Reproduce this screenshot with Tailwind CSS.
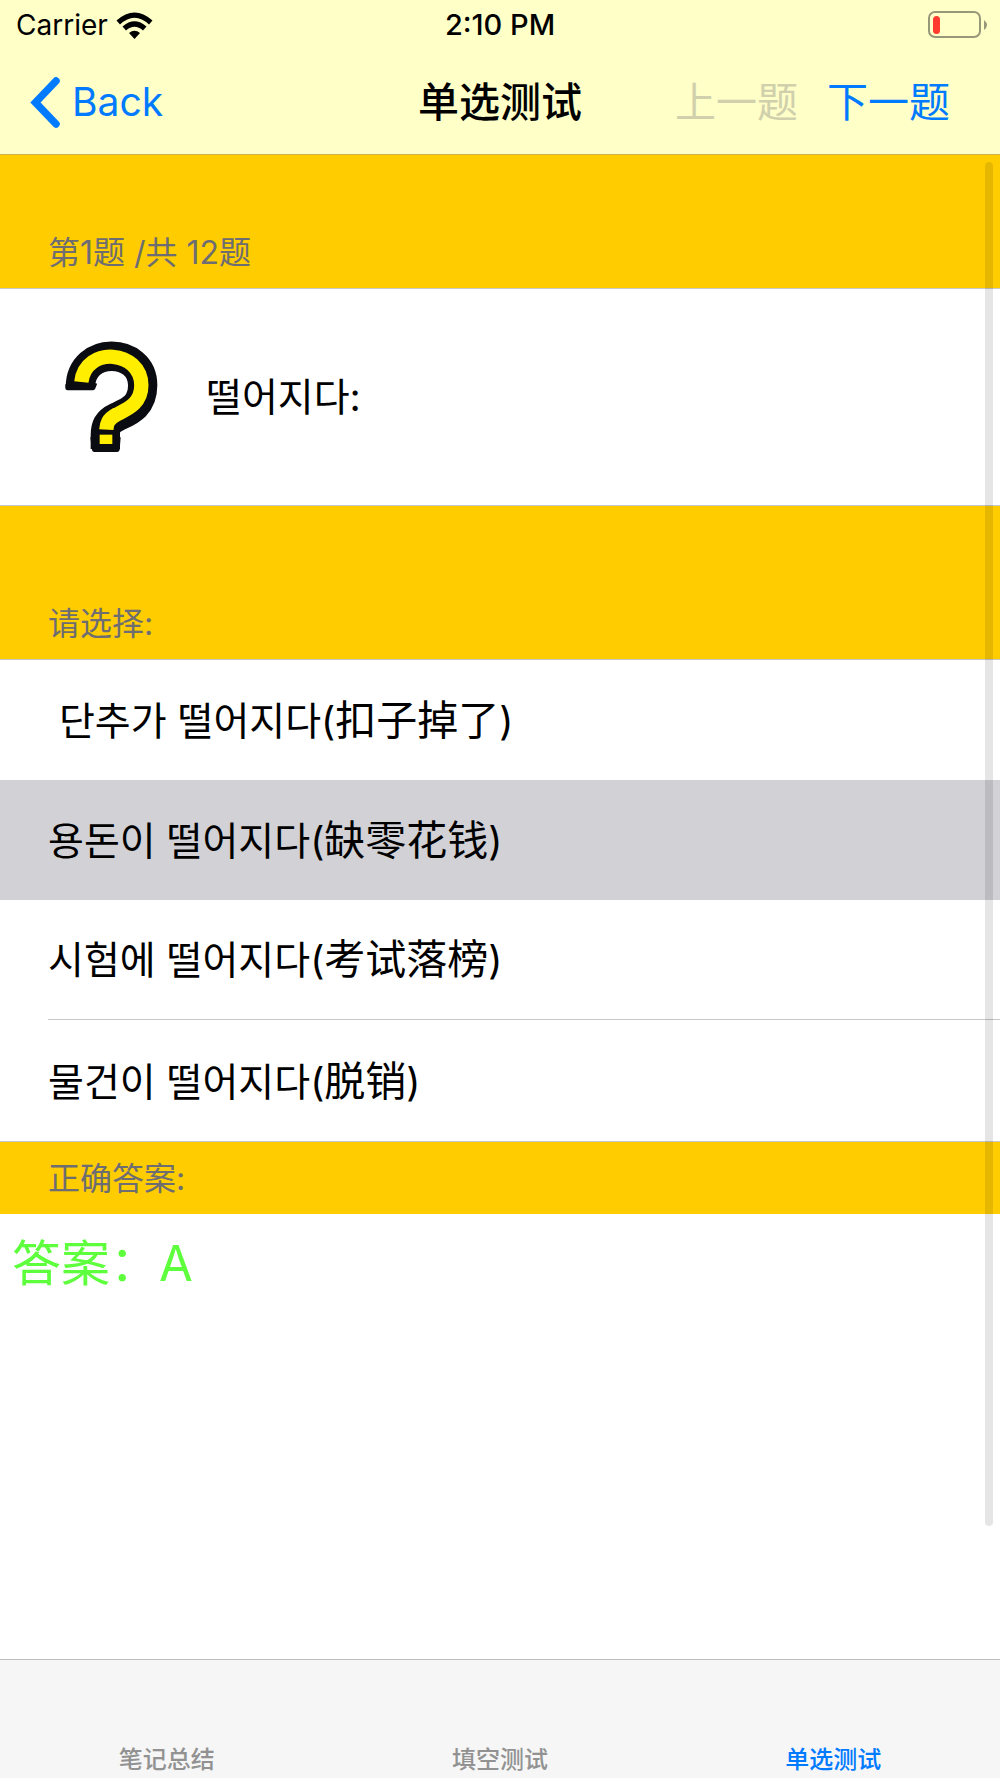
<!DOCTYPE html>
<html lang="zh-CN">
<head>
<meta charset="utf-8">
<meta name="viewport" content="width=device-width, initial-scale=1">
<title>单选测试</title>
<script src="https://cdn.jsdelivr.net/npm/@tailwindcss/browser@4"></script>
</head>
<body class="relative flex min-h-screen flex-col bg-white font-[Inter,'Noto_Sans_CJK_SC',sans-serif] text-black">
  <header class="border-b border-[#d1b24a] bg-[#ffffc8]">
    <div class="grid h-[50px] grid-cols-[1fr_auto_1fr] items-center text-[28px] leading-8">
      <div class="flex items-center gap-2 pl-4">
        <span>Carrier</span>
        <svg class="h-[27px] w-[37px]" viewBox="0 0 37 27" aria-label="Wi-Fi">
          <path d="M0.5 8.5 Q18.5 -7.5 36.5 8.500 L33 12.500 Q18.500 -1 4 12.500Z"/>
          <path d="M6.500 14.500 Q18.500 4 30.500 14.500 L27 18.500 Q18.500 11 10 18.500Z"/>
          <path d="M13 21 Q18.500 16.500 24 21 L18.500 27Z"/>
        </svg>
      </div>
      <time class="text-[29px] font-medium">2:10 PM</time>
      <svg class="mr-3 h-7 w-[60px] justify-self-end" viewBox="0 0 60 28" aria-label="电量低">
        <rect x="1" y="1" width="51" height="25" rx="6" fill="none" stroke="#97977a" stroke-width="2"/>
        <rect x="5" y="5" width="7" height="18" rx="3.500" fill="#ff3b30"/>
        <path d="M56 9 Q62 14 56 19Z" fill="#97977a"/>
      </svg>
    </div>
    <nav class="grid h-[104px] grid-cols-[1fr_auto_1fr] items-center text-[41px] leading-[48px]">
      <a href="#" class="flex items-center gap-3 pl-[30px] text-[39px] text-[#007aff]">
        <svg class="h-[51px] w-[30px]" viewBox="0 0 30 51" fill="none" stroke="currentColor" stroke-width="7.500" stroke-linecap="round" stroke-linejoin="miter" aria-hidden="true"><path d="M26 4 L5.500 25.500 L26 47"/></svg>
        Back
      </a>
      <h1 class="font-medium">单选测试</h1>
      <div class="flex justify-end gap-[29px] pr-[50px] whitespace-nowrap">
        <button type="button" disabled class="text-[#d0d0ac]">上一题</button>
        <button type="button" class="text-[#007aff]">下一题</button>
      </div>
    </nav>
  </header>

  <main class="flex-1">
    <h2 class="flex h-[133px] items-end bg-[#ffcc00] px-12 pb-[13px] text-[32px] leading-[44px] text-[#6d6d72]">第1题 /共 12题</h2>
    <section class="flex h-[218px] items-center gap-12 border-y border-[#c8c7cc] pl-[65px]">
      <svg class="h-[112px] w-[93px]" viewBox="196 362 279 336" fill="none" aria-label="问题">
        <g stroke="#0b0b12">
          <path stroke-width="88" d="M242 502 C242 375 429 380 429 495 C429 560 385 574 352 590 C322 604 317 620 317 645 V686"/>
          <path stroke-width="14" stroke-linejoin="round" d="M204 492 V503 H280 L286 488 M279 650 L284 688 H353 L356 650"/>
        </g>
        <path stroke="#ffee00" stroke-width="43" d="M245 485 C258 375 425 390 425 495 C425 552 380 567 350 583 C324 597 321 612 320 628"/>
        <path stroke="#ffee00" stroke-width="38" d="M319 643 V671"/>
      </svg>
      <p lang="ko" class="text-[39px] leading-[48px]">떨어지다:</p>
    </section>
    <h2 class="flex h-[153px] items-end bg-[#ffcc00] px-12 pb-[13px] text-[32px] leading-[44px] text-[#6d6d72]">请选择:</h2>
    <ul lang="ko" class="border-y border-[#c8c7cc] text-[39px] leading-[48px]">
      <li><button type="button" class="h-[120px] w-full px-12 text-left">&nbsp;단추가 떨어지다(<span lang="zh-CN" class="text-[41px]">扣子掉了</span>)</button></li>
      <li><button type="button" aria-pressed="true" class="h-[120px] w-full bg-[#d1d1d6] px-12 text-left">용돈이 떨어지다(<span lang="zh-CN" class="text-[41px]">缺零花钱</span>)</button></li>
      <li class="border-b border-transparent pl-12"><button type="button" class="h-[120px] w-full border-b border-[#c8c7cc] text-left">시험에 떨어지다(<span lang="zh-CN" class="text-[41px]">考试落榜</span>)</button></li>
      <li><button type="button" class="h-[120px] w-full px-12 text-left">물건이 떨어지다(<span lang="zh-CN" class="text-[41px]">脱销</span>)</button></li>
    </ul>
    <h2 class="flex h-[72px] items-end bg-[#ffcc00] px-12 pb-[13px] text-[32px] leading-[44px] text-[#6d6d72]">正确答案:</h2>
    <p class="px-3 py-[18px] text-[49px] leading-[64px] text-[#5eff3c]">答案：A</p>
  </main>

  <div class="absolute top-[162px] right-[7px] bottom-[252px] w-2 rounded-full bg-black/10" aria-hidden="true"></div>

  <nav class="grid h-[119px] grid-cols-3 items-end border-t border-[#bcbcbe] bg-[#f6f6f6] text-center text-[24px] leading-9 font-medium text-[#929292]">
    <a href="#">笔记总结</a>
    <a href="#">填空测试</a>
    <a href="#" aria-current="page" class="text-[#007aff]">单选测试</a>
  </nav>
</body>
</html>
